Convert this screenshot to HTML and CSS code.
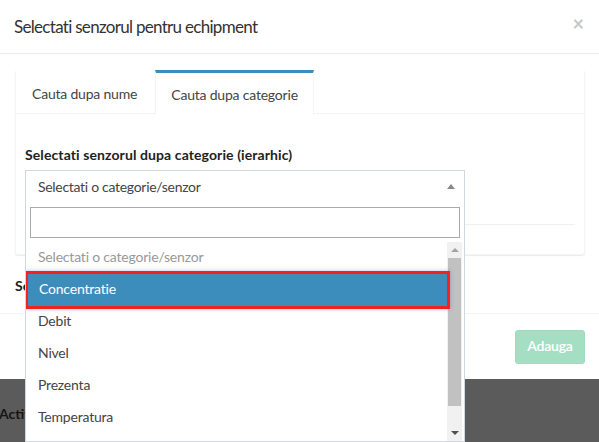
FILE: index.html
```html
<!DOCTYPE html>
<html>
<head>
<meta charset="utf-8">
<link rel="stylesheet" href="styles.css">
</head>
<body>
<div class="modal">
  <div class="modal-header">
    <h4 class="modal-title">Selectati senzorul pentru echipment</h4>
    <span class="close">×</span>
  </div>
  <div class="modal-body">
    <div class="tabs-box">
      <ul class="nav-tabs">
        <li class="tab">Cauta dupa nume</li>
        <li class="tab active">Cauta dupa categorie</li>
      </ul>
      <div class="tab-content">
        <label class="label">Selectati senzorul dupa categorie (ierarhic)</label>
        <div class="select">
          <span class="select-text">Selectati o categorie/senzor</span>
          <span class="arrow-up"></span>
        </div>
        <div class="divider"></div>
      </div>
    </div>
    <label class="label second">Selectati senzorul</label>
  </div>
  <div class="modal-footer">
    <button class="btn-add">Adauga</button>
  </div>
</div>
<div class="backdrop">
  <span class="page-text">Activ</span>
</div>

<div class="dropdown">
  <div class="search-wrap"><div class="search"></div></div>
  <div class="results">
    <ul class="options">
      <li class="opt placeholder">Selectati o categorie/senzor</li>
      <li class="opt highlighted">Concentratie</li>
      <li class="opt">Debit</li>
      <li class="opt">Nivel</li>
      <li class="opt">Prezenta</li>
      <li class="opt">Temperatura</li>
    </ul>
    <div class="scrollbar">
      <div class="sb-btn"><span class="sb-up"></span></div>
      <div class="sb-track"><div class="sb-thumb"></div></div>
      <div class="sb-btn"><span class="sb-down"></span></div>
    </div>
  </div>
</div>
</body>
</html>
```

FILE: styles.css
```css
* { box-sizing: border-box; }
html, body { margin: 0; padding: 0; }
body {
  width: 599px;
  height: 442px;
  overflow: hidden;
  font-family: Lato, "Liberation Sans", sans-serif;
  font-size: 14px;
  color: #333;
  background: #5b5b5b;
  position: relative;
}
.modal {
  background: #fff;
  width: 599px;
  height: 379px;
  display: flex;
  flex-direction: column;
}
.modal-header {
  height: 54px;
  border-bottom: 1px solid #ececec;
  padding: 0 15px 0 14px;
  display: flex;
  align-items: center;
  justify-content: space-between;
}
.modal-title {
  margin: 0;
  font-weight: 400;
  font-size: 17px;
  color: #333;
  letter-spacing: -0.7px;
  position: relative;
  top: 0;
}
.close {
  font-size: 20px;
  font-weight: 700;
  color: #000;
  opacity: 0.22;
  position: relative;
  top: -4px;
  right: 0;
  line-height: 1;
}
.modal-body {
  height: 260px;
  padding: 16px 14px 0 15px;
  border-bottom: 1px solid #f2f2f2;
}
.tabs-box {
  height: 185px;
  border-radius: 3px;
  box-shadow: 0 1px 1px rgba(0,0,0,0.08);
  border: 1px solid #f4f4f4;
  border-top: none;
  background: #fff;
}
.nav-tabs {
  list-style: none;
  margin: 0;
  padding: 0;
  display: flex;
  height: 44px;
  border-bottom: 1px solid #f4f4f4;
}
.tab {
  height: 44px;
  padding: 0 18px 0 16px;
  display: flex;
  align-items: center;
  border-top: 3px solid transparent;
  color: #444;
  font-size: 14px;
  letter-spacing: -0.2px;
}
.tab.active {
  border-top-color: #3c8dbc;
  border-left: 1px solid #f4f4f4;
  border-right: 1px solid #f4f4f4;
  background: #fff;
  height: 45px;
  margin-bottom: -1px;
  padding: 0 15px 0 15px;
}
.tab-content {
  padding: 32px 9px 0 9px;
}
.label {
  display: block;
  font-weight: 700;
  font-size: 14px;
  letter-spacing: 0.1px;
  color: #222;
  line-height: 18px;
  margin-bottom: 6px;
}
.select {
  width: 440px;
  height: 34px;
  border: 1px solid #d2d6de;
  display: flex;
  align-items: center;
  justify-content: space-between;
  padding: 0 9px 2px 12px;
}
.select-text {
  color: #444;
  letter-spacing: -0.3px;
}
.arrow-up {
  width: 0; height: 0;
  border-left: 4px solid transparent;
  border-right: 4px solid transparent;
  border-bottom: 5px solid #888;
}
.divider {
  margin-top: 20px;
  border-top: 1px solid #f0f0f0;
}
.label.second {
  margin-top: 22px;
}
.modal-footer {
  flex: 1;
  display: flex;
  align-items: center;
  justify-content: flex-end;
  padding: 0 14px 0 15px;
}
.btn-add {
  font-family: Lato, "Liberation Sans", sans-serif;
  font-size: 14px;
  font-weight: 600;
  color: #fff;
  background: #a5dfc3;
  border: 1px solid #9ddcbd;
  border-radius: 3px;
  height: 34px;
  width: 70px;
  padding: 0 0 2px 0;
  letter-spacing: -0.2px;
}
.backdrop {
  height: 63px;
  padding-top: 26px;
}
.page-text {
  font-weight: 700;
  color: #151515;
  font-size: 14px;
  margin-left: -1px;
}
.dropdown {
  position: absolute;
  left: 25px;
  top: 202px;
  width: 440px;
  height: 240px;
  background: #fff;
  border: 1px solid #d2d6de;
  border-top: none;
  display: flex;
  flex-direction: column;
}
.search-wrap {
  padding: 5px 4px 4px 4px;
}
.search {
  height: 31px;
  border: 1px solid #aaa;
}
.results {
  flex: 1;
  display: flex;
  overflow: hidden;
  position: relative;
}
.options {
  list-style: none;
  margin: 0;
  padding: 0;
  flex: 1;
}
.opt {
  height: 32px;
  padding: 0 12px 4px 12px;
  display: flex;
  align-items: center;
  color: #444;
  letter-spacing: -0.2px;
}
.opt.placeholder { color: #999; }
.opt.highlighted {
  background: #3c8dbc;
  color: #fff;
  outline: 3px solid #f2231b;
  outline-offset: 0;
  box-shadow: 0 0 4px 3px rgba(100, 60, 200, 0.4);
  position: relative;
  z-index: 1;
  margin-left: 2px;
  margin-right: 0;
  padding-left: 11px;
}
.scrollbar {
  width: 15px;
  margin-right: 2px;
  background: #f1f1f1;
  display: flex;
  flex-direction: column;
}
.sb-btn {
  height: 16px;
  display: flex;
  align-items: center;
  justify-content: center;
}
.sb-up {
  width: 0; height: 0;
  border-left: 4px solid transparent;
  border-right: 4px solid transparent;
  border-bottom: 4px solid #a3a3a3;
}
.sb-down {
  width: 0; height: 0;
  border-left: 4px solid transparent;
  border-right: 4px solid transparent;
  border-top: 4px solid #505050;
}
.sb-track {
  flex: 1;
  padding: 0 1px;
}
.sb-thumb {
  height: 148px;
  background: #c1c1c1;
}
```
